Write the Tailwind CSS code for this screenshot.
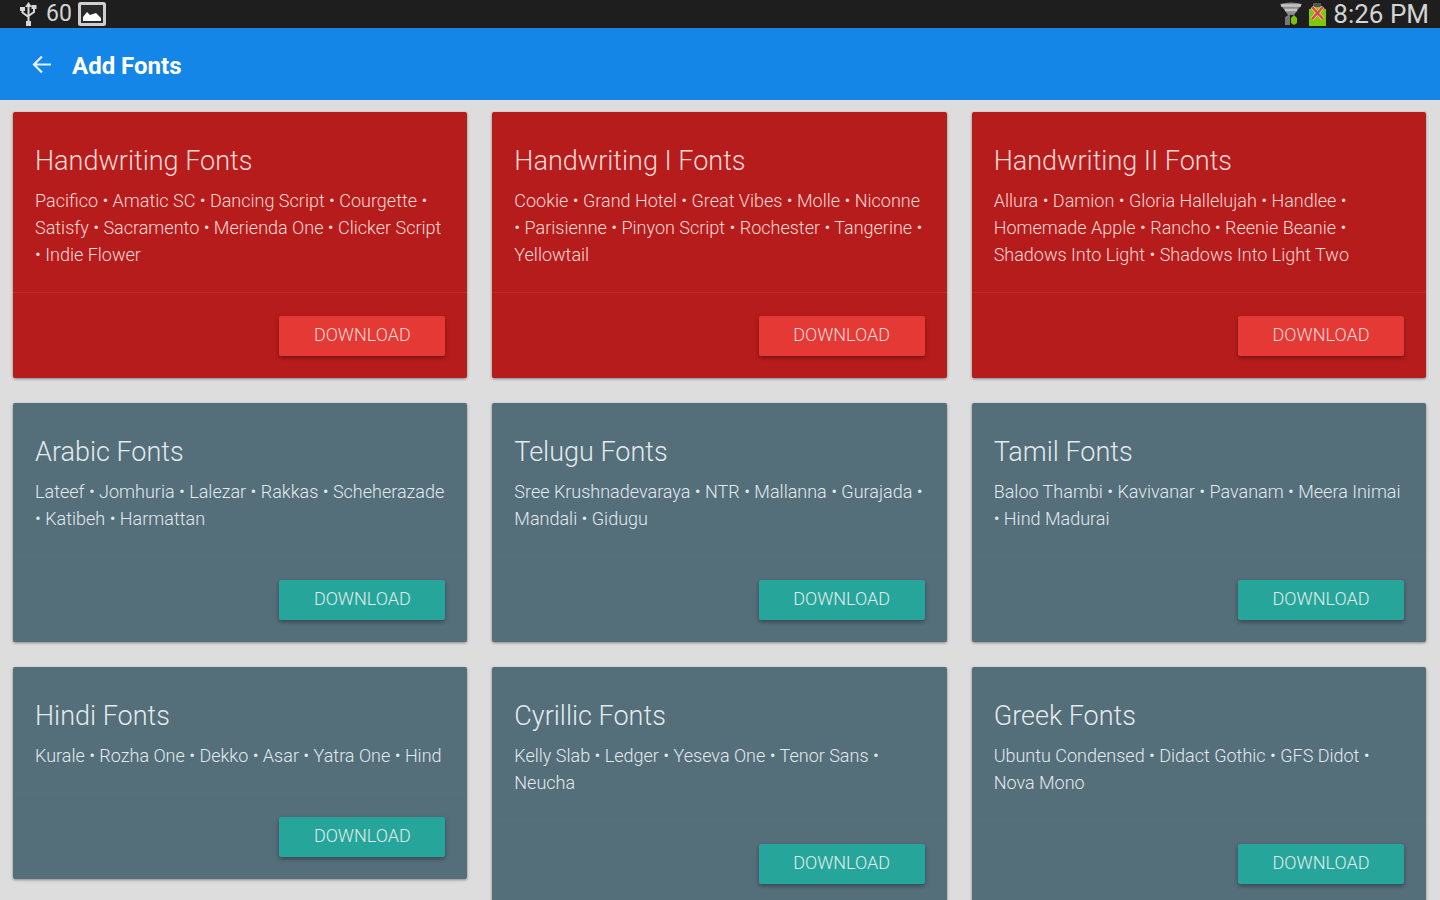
<!DOCTYPE html>
<html lang="en">
<head>
<meta charset="utf-8">
<meta name="viewport" content="width=device-width, initial-scale=1">
<title>Add Fonts</title>
<script src="https://cdn.jsdelivr.net/npm/@tailwindcss/browser@4"></script>
</head>
<body class="bg-[#dddddd] font-[Roboto,sans-serif] h-screen flex flex-col">
<div class="h-7 shrink-0 bg-[#1e1e1e] flex items-center justify-between pl-5 pr-[11px] text-[#d4d4d4]">
  <div class="flex items-center gap-[6px]">
    <svg class="w-5 h-6" viewBox="0 0 20 24" fill="none" stroke="#d8d8d8" stroke-width="2"><path d="M8.500 4v17M2.500 7v3.500l6 4.500M14 6v4l-5.500 4"/><path d="M8.500 0l3.500 5H5z" fill="#d8d8d8" stroke="none"/><path d="M6 19h5v5H6zM0 5h5v4H0zM11.500 3h5v4h-5z" fill="#d8d8d8" stroke="none"/></svg>
    <span class="text-[23px] leading-7">60</span>
    <svg class="w-7 h-6" viewBox="0 0 28 24"><rect x="1.500" y="1.500" width="25" height="21" rx="1" fill="#2a2a2a" stroke="#cfcfcf" stroke-width="3"/><path d="M5 19v-4l4-5 3 3 3-1 3-1 5 5v3z" fill="#fff"/></svg>
  </div>
  <div class="flex items-center gap-[6px]">
    <svg class="w-[22px] h-6" viewBox="0 0 22 24"><path d="M0 2Q11-1 22 2l-8 11H8z" fill="#8c8c8c"/><path d="M1 3.500h20M5 8h12" stroke="#c4c4c4" stroke-width="2.500"/><path d="M5 15l5-3v11H5z" fill="#777"/><path d="M11 16l3-3 3 3v5l-3 2-3-2z" fill="#7ac30c"/></svg>
    <svg class="w-[19px] h-6" viewBox="0 0 19 24"><path d="M5 1h8v4H5z" fill="#555"/><path d="M1 7h3V5h11v2h3v17H1z" fill="#80c60a"/><path d="M4 5l11 12M15 5L4 17" stroke="#f3c9b8" stroke-width="4"/><path d="M4 5l11 12M15 5L4 17" stroke="#dc4a3c" stroke-width="2.500"/></svg>
    <span class="text-[26px] leading-7">8:26 PM</span>
  </div>
</div>
<header class="h-[72px] shrink-0 bg-[#1486e8] flex items-center pl-8 gap-5 text-white">
  <button type="button" aria-label="Back"><svg class="w-5 h-5" viewBox="0 0 20 20" fill="none" stroke="#e4f1fd" stroke-width="2.200"><path d="M19 10.500H2M10 2.500l-8 8 8 8"/></svg></button>
  <h1 class="text-[24px] leading-8 font-bold pt-1">Add Fonts</h1>
</header>
<main id="cards" class="flex-1 min-h-0 overflow-y-auto [scrollbar-width:none] grid grid-cols-3 items-start content-start gap-[25px] pl-[13px] pr-[14px] py-3"></main>
<template id="card">
  <article class="rounded-[2px] bg-[#546e7a] shadow-[0_1px_3px_rgba(0,0,0,0.4)] text-[#e2eaed] group data-[tone=red]:bg-[#b71c1c] data-[tone=red]:text-[#fbd9d5]">
    <div class="px-[22px] pt-[23px] pb-6">
      <h2 class="text-[27px] leading-[52px] font-light"></h2>
      <p class="text-[18px] leading-[27px] font-light"></p>
    </div>
    <div class="border-t border-white/2 group-data-[tone=red]:border-white/6 px-[22px] pt-[23px] pb-[22px] flex justify-end">
      <button type="button" class="h-10 w-[166px] pb-[3px] rounded-[2px] bg-[#26a69a] shadow-[0_2px_4px_rgba(0,0,0,0.35)] text-[18px] font-light group-data-[tone=red]:bg-[#e53935]">DOWNLOAD</button>
    </div>
  </article>
</template>
<script>
const cards = [
  ['red','Handwriting Fonts','Pacifico • Amatic SC • Dancing Script • Courgette • Satisfy • Sacramento • Merienda One • Clicker Script • Indie Flower'],
  ['red','Handwriting I Fonts','Cookie • Grand Hotel • Great Vibes • Molle • Niconne • Parisienne • Pinyon Script • Rochester • Tangerine • Yellowtail'],
  ['red','Handwriting II Fonts','Allura • Damion • Gloria Hallelujah • Handlee • Homemade Apple • Rancho • Reenie Beanie • Shadows Into Light • Shadows Into Light Two'],
  ['slate','Arabic Fonts','Lateef • Jomhuria • Lalezar • Rakkas • Scheherazade • Katibeh • Harmattan'],
  ['slate','Telugu Fonts','Sree Krushnadevaraya • NTR • Mallanna • Gurajada • Mandali • Gidugu'],
  ['slate','Tamil Fonts','Baloo Thambi • Kavivanar • Pavanam • Meera Inimai • Hind Madurai'],
  ['slate','Hindi Fonts','Kurale • Rozha One • Dekko • Asar • Yatra One • Hind'],
  ['slate','Cyrillic Fonts','Kelly Slab • Ledger • Yeseva One • Tenor Sans • Neucha'],
  ['slate','Greek Fonts','Ubuntu Condensed • Didact Gothic • GFS Didot • Nova Mono']
];
for (const [tone, title, fonts] of cards) {
  const node = document.getElementById('card').content.cloneNode(true);
  node.querySelector('article').dataset.tone = tone;
  node.querySelector('h2').textContent = title;
  node.querySelector('p').textContent = fonts;
  document.getElementById('cards').append(node);
}
</script>
</body>
</html>
